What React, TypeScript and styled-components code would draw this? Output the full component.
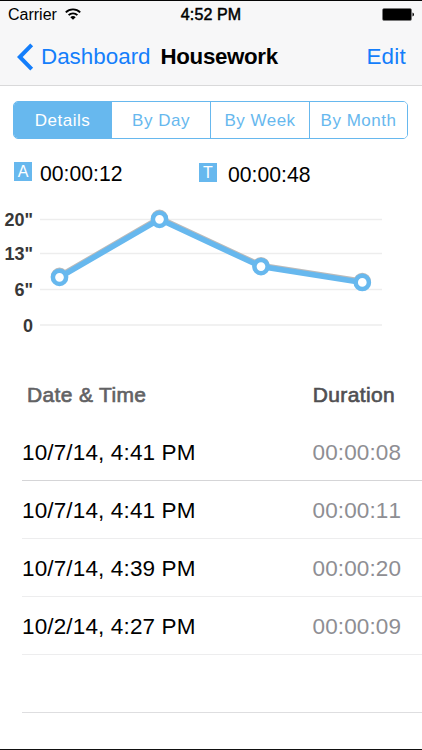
import React from "react";
import styled, { createGlobalStyle } from "styled-components";

const GlobalStyle = createGlobalStyle`
  * { box-sizing: border-box; }
  body { margin: 0; background: #fff; font-family: "Liberation Sans", Arial, sans-serif; }
`;

const blue = "#67b8ee";

const Screen = styled.main`
  width: 422px;
  height: 750px;
  display: flex;
  flex-direction: column;
  overflow: hidden;
  background: #fff;
  color: #000;
  border-top: 1px solid #050505;
  border-bottom: 1px solid #111;
`;

const Header = styled.header`
  height: 85px;
  flex: none;
  background: #f7f7f8;
  border-bottom: 1px solid #d9d9da;
`;

const StatusBar = styled.div`
  height: 27px;
  display: grid;
  grid-template-columns: 1fr auto 1fr;
  align-items: center;
  padding: 1px 8px 0;
  font-size: 16px;
  line-height: 26px;
`;

const Carrier = styled.div`
  display: flex;
  align-items: center;
  gap: 8px;
`;

const WifiIcon = styled.svg`
  margin-top: -2px;
`;

const Clock = styled.div`
  -webkit-text-stroke: 0.5px #000;
  letter-spacing: 0.1px;
`;

const Battery = styled.svg`
  justify-self: end;
  margin-top: -2px;
`;

const NavBar = styled.nav`
  height: 57px;
  display: flex;
  align-items: center;
  padding: 0 16px 0 17px;
  font-size: 22.4px;
`;

const Back = styled.a`
  display: flex;
  align-items: center;
  gap: 7px;
  color: #147efb;
`;

const Title = styled.h1`
  margin: 0 0 0 10px;
  font-size: 22.3px;
  font-weight: 700;
  letter-spacing: -0.33px;
`;

const Edit = styled.a`
  margin-left: auto;
  color: #147efb;
  letter-spacing: 0.25px;
`;

const Segments = styled.div`
  flex: none;
  display: grid;
  grid-template-columns: 98px 99px 99px 97px;
  width: 395px;
  height: 38px;
  margin: 15px 0 0 13px;
  border: 1px solid ${blue};
  border-radius: 5px;
  overflow: hidden;
`;

const Segment = styled.button<{ $active?: boolean }>`
  border: 0;
  border-right: 1px solid ${blue};
  padding: 1px 0 0;
  font-family: inherit;
  font-size: 17px;
  letter-spacing: 0.5px;
  white-space: nowrap;
  background: ${(p) => (p.$active ? blue : "#fff")};
  color: ${(p) => (p.$active ? "#fff" : blue)};
  &:last-child { border-right: 0; }
`;

const Summary = styled.section`
  flex: none;
  height: 61px;
  display: grid;
  grid-template-columns: 185px 1fr;
  padding-left: 14px;
`;

const Stat = styled.div<{ $lower?: boolean }>`
  display: flex;
  align-items: flex-start;
  gap: ${(p) => (p.$lower ? 11 : 8)}px;
  padding-top: ${(p) => (p.$lower ? 24 : 23)}px;
`;

const Badge = styled.span`
  width: 18px;
  height: 19px;
  background: ${blue};
  color: #fff;
  font-size: 16px;
  line-height: 20px;
  text-align: center;
`;

const StatValue = styled.span`
  font-size: 21.2px;
  line-height: 24px;
`;

const ChartArea = styled.section`
  flex: none;
  height: 143px;
  display: flex;
`;

const Axis = styled.div`
  width: 33px;
  padding-top: 8px;
  display: flex;
  flex-direction: column;
  align-items: flex-end;
`;

const Tick = styled.span<{ $h: number }>`
  height: ${(p) => p.$h}px;
  line-height: 24px;
  font-size: 18px;
  font-weight: 700;
  color: #383838;
`;

const TableHead = styled.div`
  flex: none;
  height: 80px;
  display: flex;
  justify-content: space-between;
  align-items: center;
  padding: 24px 27px 0 27px;
  font-size: 21px;
  line-height: 24px;
`;

const HeadCell = styled.span<{ $dark?: boolean }>`
  color: ${(p) => (p.$dark ? "#505052" : "#626264")};
  -webkit-text-stroke: 0.65px currentColor;
  letter-spacing: 0.35px;
`;

const Row = styled.div<{ $line: string }>`
  flex: none;
  height: 58px;
  margin-left: 22px;
  padding: 2px 21px 0 0;
  display: flex;
  align-items: center;
  justify-content: space-between;
  border-bottom: 1px solid ${(p) => p.$line};
  font-size: 22.5px;
  font-kerning: none;
`;

const DateTime = styled.span`
  letter-spacing: 0.14px;
`;

const Duration = styled.span`
  color: #8e8e93;
  letter-spacing: 0.1px;
`;

const rows = [
  { date: "10/7/14, 4:41 PM", time: "00:00:08", line: "#d5d5d7" },
  { date: "10/7/14, 4:41 PM", time: "00:00:11", line: "#ededee" },
  { date: "10/7/14, 4:39 PM", time: "00:00:20", line: "#ededee" },
  { date: "10/2/14, 4:27 PM", time: "00:00:09", line: "#ededee" },
  { date: "", time: "", line: "#dedee0" },
];

const ticks = [
  { label: '20"', h: 34 },
  { label: '13"', h: 36 },
  { label: '6"', h: 36 },
  { label: "0", h: 24 },
];

const points = [[26.5, 77.3], [126.5, 19.3], [228, 66.6], [329.3, 82.4]];
const line = points.map((p) => p.join(",")).join(" ");

function Chart() {
  return (
    <svg width="389" height="143" viewBox="0 0 389 143">
      {[19.5, 53.5, 89.5, 125].map((y) => (
        <path key={y} d={`M7 ${y}H349`} stroke="#ededed" strokeWidth="1.4" />
      ))}
      <g fill="none" stroke="#bbb" transform="translate(0 -1)">
        <polyline points={line} strokeWidth="5.8" />
        {points.map(([x, y]) => <circle key={x} cx={x} cy={y} r="6.6" strokeWidth="4.2" />)}
      </g>
      <polyline points={line} fill="none" stroke={blue} strokeWidth="5.6" />
      {points.map(([x, y]) => (
        <circle key={x} cx={x} cy={y} r="6.6" fill="#fff" stroke={blue} strokeWidth="4.5" />
      ))}
    </svg>
  );
}

export default function App() {
  return (
    <>
      <GlobalStyle />
      <Screen>
        <Header>
          <StatusBar>
            <Carrier>
              <span>Carrier</span>
              <WifiIcon width="16" height="12" viewBox="0 0 16 12" fill="none" stroke="#000" strokeWidth="1.9">
                <path d="M.8 4.4A10.2 10.2 0 0 1 15.2 4.4M3.6 7.2A6.2 6.2 0 0 1 12.4 7.2" />
                <path d="M8 11.8L5.3 9.2A4 4 0 0 1 10.7 9.2Z" fill="#000" stroke="none" />
              </WifiIcon>
            </Carrier>
            <Clock>4:52 PM</Clock>
            <Battery width="32" height="13" viewBox="0 0 32 13">
              <rect x=".5" y=".5" width="29" height="12" rx="1.5" fill="#000" stroke="#777" strokeWidth=".6" />
              <path d="M30.5 4.5Q32 5 32 6.5T30.5 8.5Z" />
            </Battery>
          </StatusBar>
          <NavBar>
            <Back>
              <svg width="17" height="28" viewBox="0 0 17 28" fill="none" stroke="#147efb" strokeWidth="4">
                <path d="M14.7 1.8L2.8 14L14.7 26.2" />
              </svg>
              <span>Dashboard</span>
            </Back>
            <Title>Housework</Title>
            <Edit>Edit</Edit>
          </NavBar>
        </Header>
        <Segments>
          <Segment $active>Details</Segment>
          <Segment>By Day</Segment>
          <Segment>By Week</Segment>
          <Segment>By Month</Segment>
        </Segments>
        <Summary>
          <Stat><Badge>A</Badge><StatValue>00:00:12</StatValue></Stat>
          <Stat $lower><Badge>T</Badge><StatValue>00:00:48</StatValue></Stat>
        </Summary>
        <ChartArea>
          <Axis>{ticks.map((t) => <Tick key={t.label} $h={t.h}>{t.label}</Tick>)}</Axis>
          <Chart />
        </ChartArea>
        <TableHead>
          <HeadCell>Date &amp; Time</HeadCell>
          <HeadCell $dark>Duration</HeadCell>
        </TableHead>
        {rows.map((r, i) => (
          <Row key={i} $line={r.line}>
            <DateTime>{r.date}</DateTime>
            <Duration>{r.time}</Duration>
          </Row>
        ))}
      </Screen>
    </>
  );
}
